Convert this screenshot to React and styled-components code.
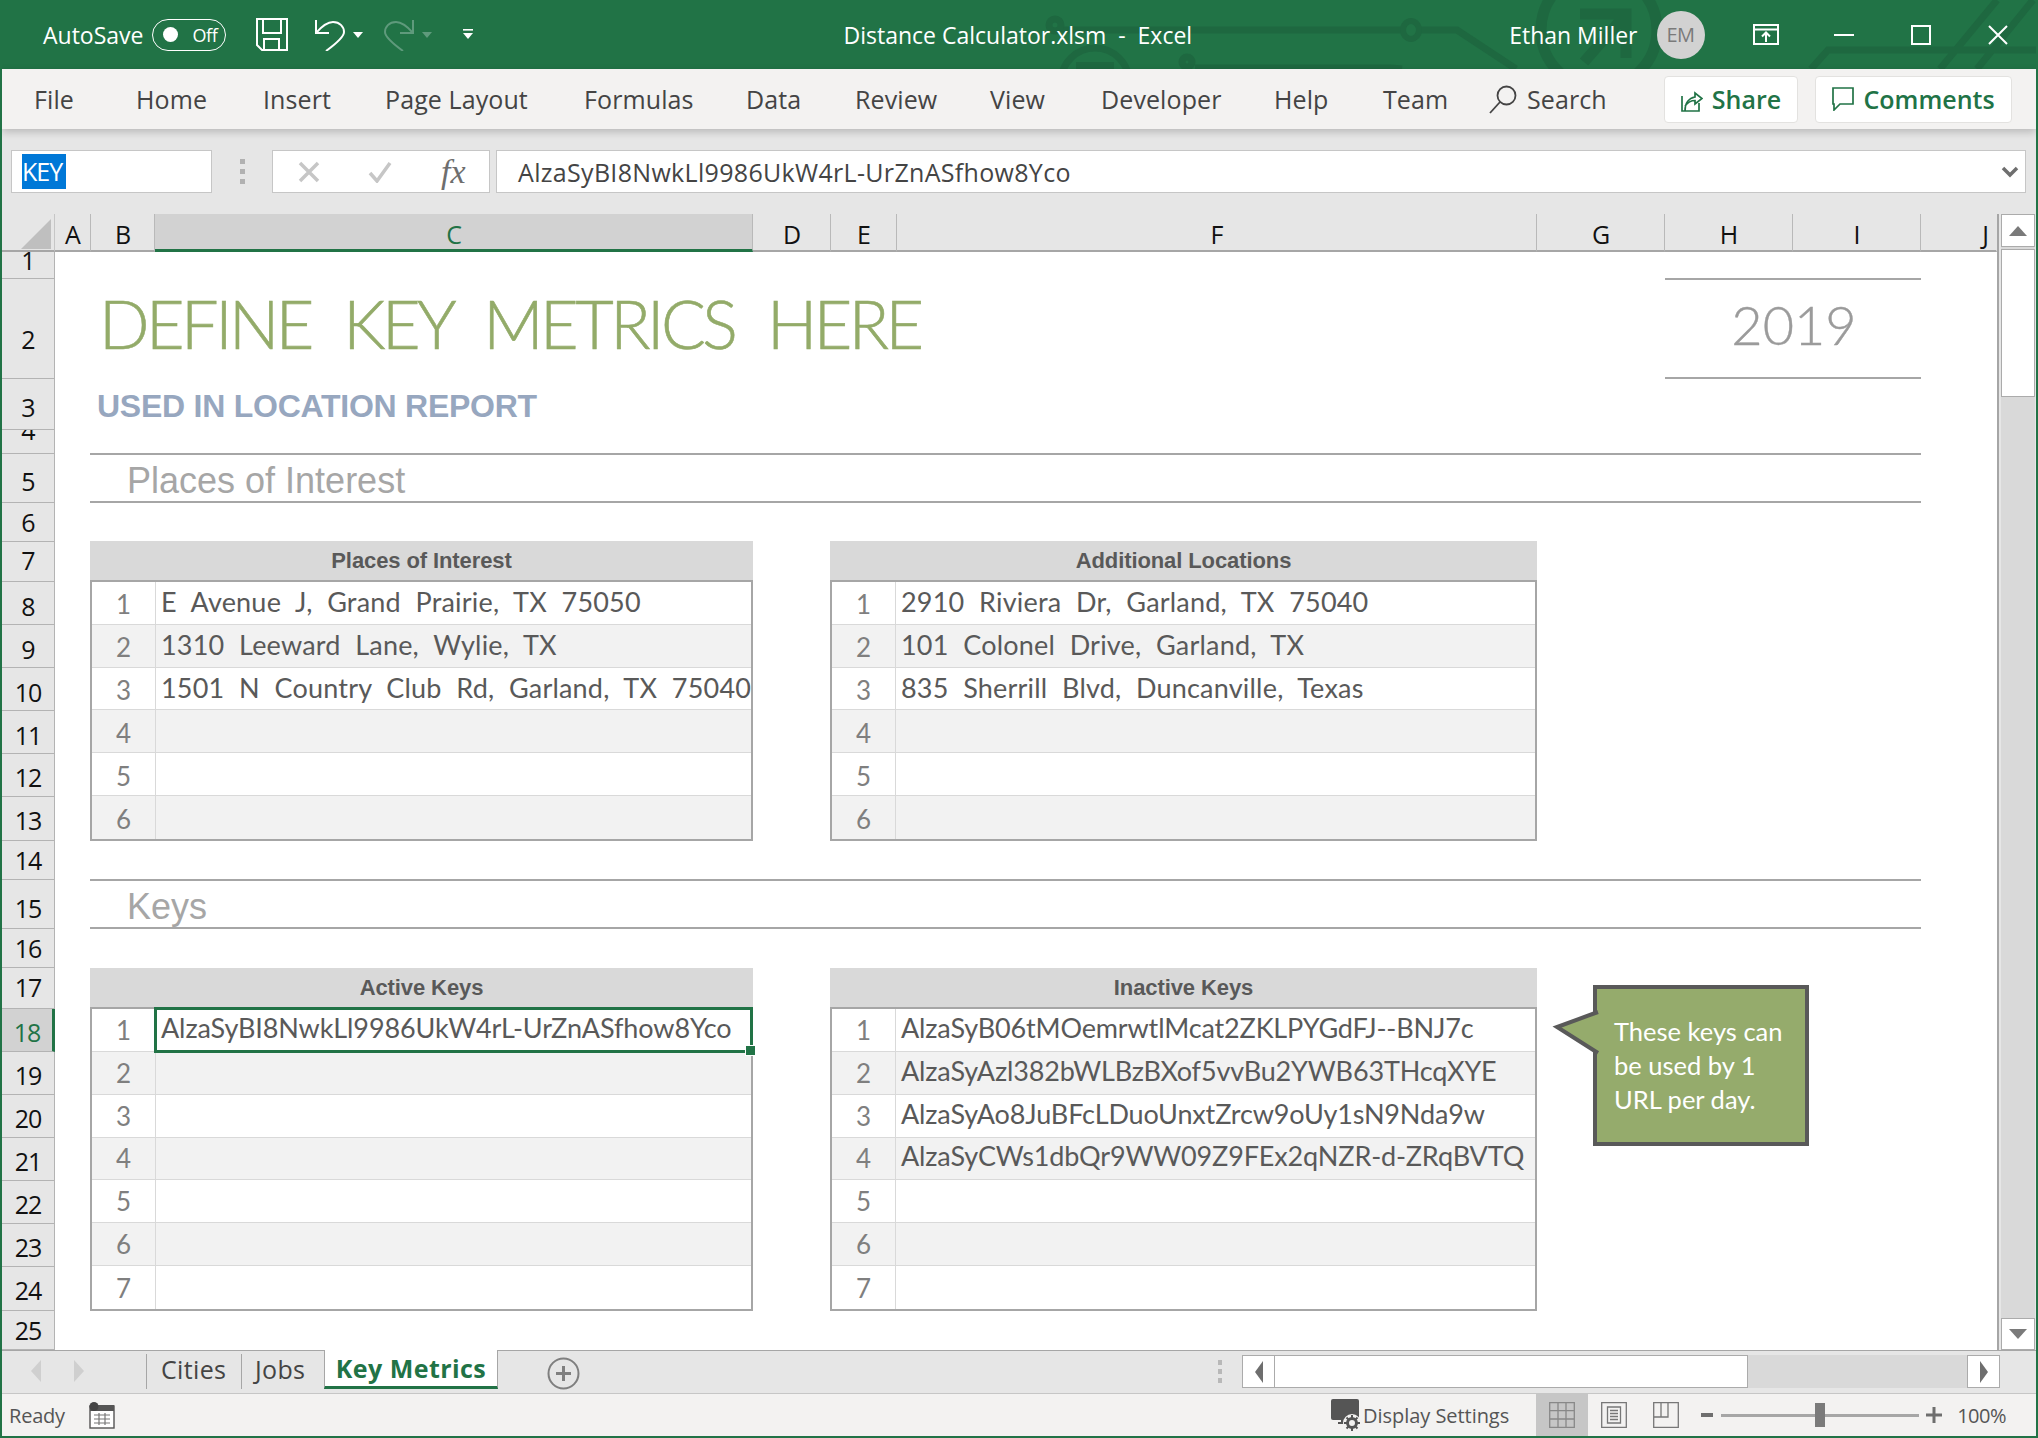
import React from 'react';
import styled, { createGlobalStyle } from 'styled-components';

const GREEN = '#217346';
const UI = '"Open Sans", "Noto Sans", sans-serif';
const ROUND = 'Lato, "Open Sans", sans-serif';
const ARIAL = '"Liberation Sans", Arial, sans-serif';

const Global = createGlobalStyle`
  html, body { margin: 0; padding: 0; background: #fff; }
  #root { width: 2038px; height: 1438px; }
  * { box-sizing: border-box; }
`;

const Win = styled.div`
  width: 2038px; height: 1438px; display: flex; flex-direction: column;
  border-left: 2px solid ${GREEN}; border-right: 2px solid ${GREEN}; border-bottom: 2px solid ${GREEN};
  font-family: ${UI}; overflow: hidden; background: #e6e6e6;
`;

/* ---------- title bar ---------- */
const TitleBar = styled.div`
  position: relative; height: 69px; background: ${GREEN}; color: #fff; display: flex; align-items: center;
  margin: 0 -2px; padding-left: 43px; flex: none; overflow: hidden;
`;
const Circuit = styled.svg`
  position: absolute; left: 0; top: 0; width: 2038px; height: 69px; pointer-events: none;
`;
const TitleGroup = styled.div`
  position: relative; display: flex; align-items: center; flex: none;
  margin-left: ${p => p.$ml || 0}px; gap: ${p => p.$gap || 0}px;
`;
const TitleText = styled.span`
  font-size: 23px; color: #fff; white-space: pre; letter-spacing: ${p => p.$ls || 0}px; line-height: 30px;
`;
const Toggle = styled.div`
  width: 74px; height: 32px; border: 1.5px solid #fff; border-radius: 16px; margin-left: 9px; display: flex; align-items: center;
  padding-left: 10px; gap: 14px; font-size: 18px; letter-spacing: -0.4px;
`;
const Knob = styled.span`
  width: 15px; height: 15px; background: #fff; border-radius: 50%; flex: none;
`;
const Avatar = styled.div`
  width: 48px; height: 48px; border-radius: 50%; background: #d2d2d2; color: #7a7a7a; display: flex;
  align-items: center; justify-content: center; font-size: 20px; letter-spacing: -0.6px;
`;

/* ---------- ribbon ---------- */
const Ribbon = styled.div`
  height: 60px; background: #f3f2f1; display: grid; align-items: center; flex: none; padding-left: 32px;
  grid-template-columns: 102px 127px 122px 199px 162px 109px 135px 111px 173px 109px 107px 174px 151px 197px;
  box-shadow: 0 3px 8px rgba(0,0,0,.2); position: relative; z-index: 2;
`;
const RibbonTab = styled.span`
  font-size: 25px; color: #444; letter-spacing: 0.1px; white-space: nowrap;
`;
const SearchBox = styled.span`
  display: flex; align-items: center; gap: 9px; font-size: 25px; color: #444; letter-spacing: 0.1px; margin-left: -2px;
`;
const PillButton = styled.button`
  height: 47px; width: ${p => p.$w}px; background: #fff; border: 1px solid #e3e2e0; border-radius: 4px; display: flex; align-items: center;
  justify-content: center; gap: 9px; font-family: ${UI}; font-size: 25px; font-weight: 600; color: ${GREEN}; letter-spacing: 0; padding: 0;
`;

/* ---------- formula bar ---------- */
const FormulaBar = styled.div`
  height: 85px; padding: 21px 10px 21px 9px; display: flex; align-items: stretch; flex: none;
`;
const NameBox = styled.div`
  width: 201px; background: #fff; border: 1.5px solid #c6c6c6; display: flex; align-items: center; padding-left: 10px;
`;
const Selected = styled.span`
  background: #0078d7; color: #fff; font-size: 25px; letter-spacing: -1px; line-height: 35px; padding: 0; width: 44px; display: block; white-space: nowrap;
`;
const Grip = styled.div`
  width: 60px; display: flex; flex-direction: column; gap: 5px; align-items: center; justify-content: center;
`;
const GripDot = styled.span`
  width: 5px; height: 5px; background: #b1b1b1;
`;
const FnBox = styled.div`
  width: 218px; background: #fff; border: 1.5px solid #c6c6c6; display: flex; align-items: center; padding-left: 25px; gap: 48px;
`;
const FxLabel = styled.span`
  font-family: "Liberation Serif", serif; font-style: italic; font-size: 34px; color: #6e6e6e; margin-left: 1px;
`;
const FormulaInput = styled.div`
  flex: 1; margin-left: 6px; background: #fff; border: 1.5px solid #c6c6c6; display: flex; align-items: center; padding: 0 6px 0 21px;
  justify-content: space-between; font-size: 25px; color: #444; letter-spacing: 0.32px;
`;

/* ---------- sheet ---------- */
const SheetArea = styled.div`
  height: 1136px; display: flex; flex: none; background: #e6e6e6;
`;
const Sheet = styled.div`
  position: relative; width: 1997px; height: 1136px; overflow: hidden; flex: none; display: grid; background: #fff;
  grid-template-columns: 53px 36px 64px 598px 78px 66px 640px 128px 128px 128px 76px;
  grid-template-rows: ${p => p.$rows};
  border-right: 2px solid #a6a6a6;
`;
const Corner = styled.div`
  grid-column: 1; grid-row: 1; background: #e6e6e6; border-bottom: 2px solid #a6a6a6; border-right: 1px solid #c6c6c6; display: flex; align-items: flex-end;
  justify-content: flex-end; padding: 0 3px 1px 0;
`;
const ColHead = styled.div`
  grid-row: 1; grid-column: ${p => p.$col}; background: ${p => p.$on ? '#d2d2d2' : '#e6e6e6'}; display: flex; align-items: center; padding: 4px ${p => p.$end ? 8 : 0}px 0 0;
  justify-content: ${p => p.$end ? 'flex-end' : 'center'}; font-size: 25px; color: ${p => p.$on ? GREEN : '#111'}; line-height: 30px;
  border-bottom: ${p => p.$on ? `3px solid ${GREEN}` : '2px solid #a6a6a6'}; border-right: 1.5px solid ${p => p.$last ? 'transparent' : '#b9b9b9'};
  letter-spacing: -1px;
`;
const RowHead = styled.div`
  grid-column: 1; grid-row: ${p => p.$row}; background: ${p => p.$on ? '#d2d2d2' : '#e6e6e6'}; overflow: hidden; display: flex; justify-content: center; align-items: flex-end;
  font-size: 25px; line-height: 30px; color: ${p => p.$on ? GREEN : '#111'}; letter-spacing: -1px;
  padding-bottom: ${p => p.$pb}px; border-bottom: 1.5px solid #b3b3b3; border-right: ${p => p.$on ? `3px solid ${GREEN}` : '1.5px solid #b3b3b3'};
`;
const Heading = styled.div`
  grid-column: 3 / 9; grid-row: 3; padding: 0 0 13px 8px; align-self: center;
  font-family: Lato, sans-serif; font-weight: 300; font-size: 66.5px; line-height: 80px; color: #93ab69; word-spacing: 18px; letter-spacing: -3.5px; white-space: nowrap;
  -webkit-text-stroke: 0.6px #93ab69;
`;
const SubHeading = styled.div`
  grid-column: 3 / 9; grid-row: 4; padding: 2px 0 0 6px; font-family: ${ARIAL}; font-weight: 700; font-size: 32px; line-height: 40px; color: #97a7bf; letter-spacing: -0.25px;
  align-self: center; white-space: nowrap;
`;
const YearBox = styled.div`
  grid-column: 9 / 11; grid-row: 3; margin-top: -1px; border-top: 2px solid #a6a6a6; border-bottom: 2px solid #a6a6a6; display: flex; align-items: center; justify-content: center;
  font-family: Lato, sans-serif; font-weight: 300; font-size: 54px; color: #9b9b9b; padding: 0 0 8px 2px; -webkit-text-stroke: 0.4px #9b9b9b;
`;
const Section = styled.div`
  grid-column: 3 / 11; grid-row: ${p => p.$row}; margin: -1px 0 0 -1px; border-top: 2px solid #a6a6a6; border-bottom: 2px solid #a6a6a6; display: flex; align-items: center;
  padding: 6px 0 0 37px; font-family: ${ARIAL}; font-size: 36px; color: #a6a6a6; letter-spacing: 0; line-height: 40px;
`;
const Table = styled.div`
  grid-column: ${p => p.$col}; grid-row: ${p => p.$row}; display: flex; flex-direction: column; margin: ${p => p.$mt}px 0 0 -1px;
`;
const TableHead = styled.div`
  height: 39px; flex: none; background: #d9d9d9; display: flex; align-items: center; justify-content: center;
  font-family: ${ARIAL}; font-weight: 700; font-size: 22px; color: #595959; letter-spacing: -0.1px; padding-top: 1px;
`;
const TableBody = styled.div`
  flex: 1; border: 2px solid #a6a6a6; display: grid; grid-auto-rows: 1fr;
`;
const TableRow = styled.div`
  display: grid; grid-template-columns: 64px 1fr; background: ${p => p.$alt ? '#f2f2f2' : '#fff'}; border-bottom: ${p => p.$last ? 0 : '1.5px solid #d9d9d9'};
`;
const RowNum = styled.div`
  display: flex; align-items: center; justify-content: center; border-right: 1.5px solid #d9d9d9; padding: 3px 0 ${p => p.$lift}px 0;
  font-family: ${ROUND}; font-size: 26px; color: #7f7f7f;
`;
const RowVal = styled.div`
  position: relative; display: flex; align-items: center; padding: 0 0 ${p => 2 + p.$lift}px 5px; font-family: ${ROUND}; font-size: 27px; color: #595959;
  word-spacing: ${p => p.$ws || 0}px; letter-spacing: ${p => p.$ls || 0}px; white-space: nowrap;
  ${p => p.$sel && `
    outline: 3px solid ${GREEN}; outline-offset: -1px;
    &::after { content: ''; position: absolute; right: -5px; bottom: -5px; width: 9px; height: 9px; background: ${GREEN}; border: 1px solid #fff; }
  `}
`;
const Callout = styled.div`
  position: absolute; left: 1591px; top: 771px; width: 216px; height: 161px; background: #95ab6c; border: 4px solid #595959; color: #fff;
  font-family: Lato, sans-serif; font-size: 25.5px; line-height: 34px; padding: 25px 0 0 17px; white-space: pre-line;
`;
const Tail = styled.svg`
  position: absolute; left: -45px; top: 20px; width: 50px; height: 48px; overflow: visible;
`;

/* ---------- scrollbars ---------- */
const VScroll = styled.div`
  width: 34px; margin-left: 2px; background: #d9d9d9; display: flex; flex-direction: column;
`;
const ScrollBtn = styled.div`
  background: #fff; border: 1.5px solid #ababab; display: flex; align-items: center; justify-content: center; flex: none;
  width: ${p => p.$w}px; height: ${p => p.$h}px;
`;
const VThumb = styled.div`
  height: 148px; margin-top: 2px; background: #fff; border: 1.5px solid #ababab; flex: none;
`;
const VSpacer = styled.div`
  flex: 1;
`;

/* ---------- tab bar ---------- */
const TabBar = styled.div`
  height: 44px; flex: none; display: flex; align-items: flex-start; border-bottom: 1.5px solid #c6c6c6; border-top: 1.5px solid #a6a6a6; background: #e6e6e6; position: relative;
`;
const NavArrows = styled.div`
  width: 144px; height: 39px; display: flex; align-items: center; gap: 33px; padding-left: 29px; flex: none;
`;
const SheetTab = styled.div`
  height: 35px; width: ${p => p.$w}px; margin-top: 3px; display: flex; align-items: center; padding: 0 0 5px ${p => p.$pl}px; flex: none;
  font-size: 25px; line-height: 30px; letter-spacing: 0.35px; color: #444; border-left: 1px solid #a6a6a6;
`;
const ActiveTab = styled.div`
  height: 39px; width: 174px; margin-top: -1px; flex: none; display: flex; align-items: center; justify-content: center; background: #fff;
  border-bottom: 3px solid ${GREEN}; border-left: 1px solid #a6a6a6; border-right: 1.5px solid #a6a6a6;
  font-size: 25px; font-weight: 700; letter-spacing: 0.45px; color: ${GREEN};
`;
const AddWrap = styled.div`
  margin: 6px 0 0 49px; display: flex; width: 33px; height: 33px; flex: none;
`;
const HScrollWrap = styled.div`
  margin-left: auto; display: flex; align-items: center; height: 33px; margin-top: 4px; margin-right: 36px;
`;
const HGrip = styled.div`
  display: flex; flex-direction: column; gap: 4px; margin-right: 20px;
`;
const HGripDot = styled.span`
  width: 4px; height: 5px; background: #b8b8b8; display: block;
`;
const HThumb = styled.div`
  width: 473px; height: 33px; background: #fff; border: 1.5px solid #ababab; border-left: 0; flex: none;
`;
const HTrack = styled.div`
  width: 219px; height: 33px; background: #d9d9d9; flex: none;
`;

/* ---------- status bar ---------- */
const StatusBar = styled.div`
  height: 42px; flex: none; background: #f3f2f1; display: flex; align-items: center; font-size: 20px; color: #555; letter-spacing: -0.2px; padding-left: 7px;
`;
const StatusRight = styled.div`
  margin-left: auto; display: flex; align-items: center; height: 100%;
`;
const DisplayLabel = styled.span`
  margin: 0 27px 0 1px; letter-spacing: -0.05px;
`;
const ViewBtn = styled.div`
  width: ${p => p.$w}px; height: 100%; display: flex; align-items: center; justify-content: center; background: ${p => p.$on ? '#c6c6c6' : 'transparent'}; flex: none;
`;
const Slider = styled.div`
  position: relative; width: 198px; height: 3px; background: #a6a6a6; margin: 0 7px 0 8px; flex: none;
`;
const SliderThumb = styled.span`
  position: absolute; left: 94px; top: -11px; width: 10px; height: 24px; background: #7a7a7a;
`;
const Zoom = styled.span`
  margin-left: 15px; margin-right: 30px; font-size: 20px; color: #555; letter-spacing: -0.5px;
`;

/* ---------- icons ---------- */
const I = styled.svg`
  flex: none; display: block; margin-left: ${p => p.$ml || 0}px;
`;
const Tri = ({ d, w = 14, h = 22, c = '#cfcfcf' }) => {
  const pts = { l: `${w},0 ${w},${h} 0,${h/2}`, r: `0,0 0,${h} ${w},${h/2}`, u: `0,${h} ${w},${h} ${w/2},0`, d: `0,0 ${w},0 ${w/2},${h}` }[d];
  return <I width={w} height={h} viewBox={`0 0 ${w} ${h}`}><polygon points={pts} fill={c} /></I>;
};

const rowDefs = [
  [27,3],[100,24],[51,7],[24,8],[49,6],[39,4],[40,6],
  [43,3],[43,3],[43,3],[43,3],[43,4],[44,5],
  [39,4],[49,5],[39,4],[41,6],
  [43,4],[43,4],[43,4],[43,4],[43,4],[43,4],[44,5],
  [39,4],[10,0],
];
const rowsTemplate = '38px ' + rowDefs.map(r => r[0] + 'px').join(' ');
const cols = [['A',2],['B',3],['C',4],['D',5],['E',6],['F',7],['G',8],['H',9],['I',10],['J',11]];

const DataTable = ({ col, row, mt, title, count, items, sel, ws, ls, lift = 0 }) => (
  <Table $col={col} $row={row} $mt={mt}>
    <TableHead>{title}</TableHead>
    <TableBody>
      {Array.from({ length: count }, (_, i) => (
        <TableRow key={i} $alt={i % 2 === 1} $last={i === count - 1}>
          <RowNum $lift={lift}>{i + 1}</RowNum>
          <RowVal $ws={ws} $ls={ls} $lift={lift} $sel={sel && i === 0}>{items[i] || ''}</RowVal>
        </TableRow>
      ))}
    </TableBody>
  </Table>
);

export default function App() {
  return (
    <Win>
      <Global />
      <TitleBar>
        <Circuit viewBox="0 0 2038 69" fill="none" stroke="#1e6840" strokeWidth="7">
          <path d="M1062 30H1402M1420 30H1457L1516 69" />
          <ellipse cx="1411" cy="30" rx="8" ry="9" strokeWidth="6" />
          <circle cx="1055" cy="25" r="6" />
          <circle cx="1095" cy="82" r="34" />
          <path d="M1076 66H1114" strokeWidth="8" />
          <circle cx="1187" cy="62" r="5" />
          <path d="M1195 68H1390L1402 69" />
          <circle cx="1599" cy="30" r="58" strokeWidth="11" />
          <path d="M1580 14H1626V58M1626 14L1584 62" strokeWidth="11" />
          <path d="M1811 69L1828 50H2038M1997 0L1940 69M2033 0L1977 69" />
        </Circuit>
        <TitleGroup>
          <TitleText>AutoSave</TitleText>
          <Toggle><Knob />Off</Toggle>
        </TitleGroup>
        <TitleGroup $ml={30}>
          <I width="32" height="33" viewBox="0 0 32 33" fill="none" stroke="#fff" strokeWidth="2">
            <path d="M1 1H31V32H6L1 27Z" />
            <path d="M7 1V15H25V1M8 32V21H23V32" />
          </I>
        </TitleGroup>
        <TitleGroup $ml={27}>
          <I width="30" height="33" viewBox="0 0 30 33" fill="none" stroke="#fff" strokeWidth="2">
            <path d="M1 2V15H14M1 15C7 8 12 4 18 4C25 4 29 9 29 14C29 19 22 25 11 33" />
          </I>
          <I $ml={8} width="10" height="6" viewBox="0 0 10 6"><polygon points="0,0 10,0 5,6" fill="#fff" /></I>
        </TitleGroup>
        <TitleGroup $ml={21}>
          <I width="30" height="33" viewBox="0 0 30 33" fill="none" stroke="#5f9a7c" strokeWidth="2">
            <path d="M29 2V15H16M29 15C23 8 18 4 12 4C5 4 1 9 1 14C1 19 8 25 19 33" />
          </I>
          <I $ml={8} width="10" height="6" viewBox="0 0 10 6"><polygon points="0,0 10,0 5,6" fill="#5f9a7c" /></I>
        </TitleGroup>
        <TitleGroup $ml={31}>
          <I width="10" height="11" viewBox="0 0 10 11" fill="#fff"><rect width="10" height="1.6" /><polygon points="0,4 10,4 5,10" /></I>
        </TitleGroup>
        <TitleGroup $ml={370}>
          <TitleText>{'Distance Calculator.xlsm  -  Excel'}</TitleText>
        </TitleGroup>
        <TitleGroup $ml={317}>
          <TitleText>Ethan Miller</TitleText>
        </TitleGroup>
        <TitleGroup $ml={19}><Avatar>EM</Avatar></TitleGroup>
        <TitleGroup $ml={48}>
          <I width="26" height="21" viewBox="0 0 26 21" fill="none" stroke="#fff" strokeWidth="2">
            <path d="M1 1H25V20H1ZM1 5.5H25M13 18V9M9 12.5L13 8.5L17 12.5" />
          </I>
        </TitleGroup>
        <TitleGroup $ml={55}>
          <I width="20" height="2" viewBox="0 0 20 2"><rect width="20" height="2" fill="#fff" /></I>
        </TitleGroup>
        <TitleGroup $ml={57}>
          <I width="20" height="20" viewBox="0 0 20 20" fill="none" stroke="#fff" strokeWidth="2"><rect x="1" y="1" width="18" height="18" /></I>
        </TitleGroup>
        <TitleGroup $ml={57}>
          <I width="20" height="20" viewBox="0 0 20 20" fill="none" stroke="#fff" strokeWidth="2"><path d="M1 1L19 19M19 1L1 19" /></I>
        </TitleGroup>
      </TitleBar>

      <Ribbon>
        {['File','Home','Insert','Page Layout','Formulas','Data','Review','View','Developer','Help','Team'].map(t => <RibbonTab key={t}>{t}</RibbonTab>)}
        <SearchBox>
          <I width="30" height="30" viewBox="0 0 30 30" fill="none" stroke="#444" strokeWidth="1.8"><circle cx="18.5" cy="11.5" r="9" /><path d="M12 18L2 29" /></I>
          Search
        </SearchBox>
        <PillButton $w={134}>
          <I width="22" height="25" viewBox="0 0 22 25" fill="none" stroke={GREEN} strokeWidth="1.7">
            <path d="M1 9V24H18V16M4 24C4 16 8 11 14 10V6L21 11.5L14 17V13.5C10 13.5 7 15 4 19" />
          </I>
          Share
        </PillButton>
        <PillButton $w={197}>
          <I width="22" height="24" viewBox="0 0 22 24" fill="none" stroke={GREEN} strokeWidth="1.7"><path d="M1 1H21V17H8L2 23V17H1Z" /></I>
          Comments
        </PillButton>
      </Ribbon>

      <FormulaBar>
        <NameBox><Selected>KEY</Selected></NameBox>
        <Grip><GripDot /><GripDot /><GripDot /></Grip>
        <FnBox>
          <I width="22" height="22" viewBox="0 0 22 22" fill="none" stroke="#c6c6c6" strokeWidth="3.5"><path d="M2 2L20 20M20 2L2 20" /></I>
          <I width="24" height="22" viewBox="0 0 24 22" fill="none" stroke="#c6c6c6" strokeWidth="3.5"><path d="M2 12L9 20L22 2" /></I>
          <FxLabel>fx</FxLabel>
        </FnBox>
        <FormulaInput>
          AlzaSyBI8NwkLl9986UkW4rL-UrZnASfhow8Yco
          <I width="18" height="12" viewBox="0 0 18 12" fill="none" stroke="#6e6e6e" strokeWidth="3.5"><path d="M2 2L9 9L16 2" /></I>
        </FormulaInput>
      </FormulaBar>

      <SheetArea>
        <Sheet $rows={rowsTemplate}>
          <Corner>
            <I width="30" height="30" viewBox="0 0 30 30"><polygon points="30,0 30,30 0,30" fill="#bfbfbf" /></I>
          </Corner>
          {cols.map(([l, c]) => (
            <ColHead key={l} $col={c} $on={l === 'C'} $last={l === 'J'} $end={l === 'J'}>{l}</ColHead>
          ))}
          {rowDefs.map(([h, pb], i) => (
            <RowHead key={i} $row={i + 2} $pb={pb} $on={i === 17}>{i < 25 ? i + 1 : ''}</RowHead>
          ))}

          <Heading>DEFINE KEY METRICS HERE</Heading>
          <SubHeading>USED IN LOCATION REPORT</SubHeading>
          <YearBox>2019</YearBox>
          <Section $row={6}>Places of Interest</Section>

          <DataTable col="3 / 5" row="8 / 15" mt={-1} title="Places of Interest" count={6} ws={7.5} ls={0.2}
            items={['E Avenue J, Grand Prairie, TX 75050', '1310 Leeward Lane, Wylie, TX', '1501 N Country Club Rd, Garland, TX 75040']} />
          <DataTable col="6 / 8" row="8 / 15" mt={-1} title="Additional Locations" count={6} ws={7.5} ls={0.2}
            items={['2910 Riviera Dr, Garland, TX 75040', '101 Colonel Drive, Garland, TX', '835 Sherrill Blvd, Duncanville, Texas']} />

          <Section $row={16}>Keys</Section>

          <DataTable col="3 / 5" row="18 / 26" mt={0} title="Active Keys" count={7} sel ls={-0.1} lift={3}
            items={['AlzaSyBI8NwkLl9986UkW4rL-UrZnASfhow8Yco']} />
          <DataTable col="6 / 8" row="18 / 26" mt={0} title="Inactive Keys" count={7} ls={-0.15} lift={3}
            items={['AlzaSyB06tMOemrwtlMcat2ZKLPYGdFJ--BNJ7c', 'AlzaSyAzl382bWLBzBXof5vvBu2YWB63THcqXYE', 'AlzaSyAo8JuBFcLDuoUnxtZrcw9oUy1sN9Nda9w', 'AlzaSyCWs1dbQr9WW09Z9FEx2qNZR-d-ZRqBVTQ']} />

          <Callout>
            <Tail viewBox="0 0 50 48">
              <polygon points="47,2 4,18 47,44" fill="#95ab6c" />
              <path d="M46 3L5 18L46 44" fill="none" stroke="#595959" strokeWidth="4" />
            </Tail>
            {'These keys can\nbe used by 1\nURL per day.'}
          </Callout>
        </Sheet>
        <VScroll>
          <ScrollBtn $w={34} $h={33}><Tri d="u" w={18} h={10} c="#7a7a7a" /></ScrollBtn>
          <VThumb />
          <VSpacer />
          <ScrollBtn $w={34} $h={32}><Tri d="d" w={18} h={10} c="#7a7a7a" /></ScrollBtn>
        </VScroll>
      </SheetArea>

      <TabBar>
        <NavArrows><Tri d="l" w={10} h={22} /><Tri d="r" w={10} h={22} /></NavArrows>
        <SheetTab $w={95} $pl={14}>Cities</SheetTab>
        <SheetTab $w={83} $pl={13}>Jobs</SheetTab>
        <ActiveTab>Key Metrics</ActiveTab>
        <AddWrap>
          <I width="33" height="33" viewBox="0 0 33 33" fill="none" stroke="#7f7f7f"><circle cx="16.5" cy="16.5" r="15" strokeWidth="2" /><path d="M16.5 9V24M9 16.5H24" strokeWidth="3" /></I>
        </AddWrap>
        <HScrollWrap>
          <HGrip><HGripDot /><HGripDot /><HGripDot /></HGrip>
          <ScrollBtn $w={33} $h={33}><Tri d="l" w={8} h={22} c="#6e6e6e" /></ScrollBtn>
          <HThumb />
          <HTrack />
          <ScrollBtn $w={33} $h={33}><Tri d="r" w={8} h={22} c="#6e6e6e" /></ScrollBtn>
        </HScrollWrap>
      </TabBar>

      <StatusBar>
        Ready
        <I $ml={24} width="26" height="27" viewBox="0 0 26 27">
          <rect x="1" y="4" width="24" height="22" fill="#fff" stroke="#555" strokeWidth="1.4" />
          <rect x="1" y="3" width="24" height="6" fill="#555" />
          <circle cx="5" cy="4.5" r="4.5" fill="#444" />
          <path d="M5 13H21M5 17H21M5 21H21M10 11V23M16 11V23" stroke="#777" strokeWidth="1.2" />
        </I>
        <StatusRight>
          <I width="31" height="34" viewBox="0 0 31 34" fill="#555">
            <rect x="0" y="1" width="28" height="21" rx="2" />
            <path d="M10 22H14V26H7V24H10Z" />
            <circle cx="21" cy="25" r="7" fill="#f3f2f1" stroke="#f3f2f1" strokeWidth="4" />
            <circle cx="21" cy="25" r="4.5" fill="none" stroke="#555" strokeWidth="3" />
            <path d="M21 17V33M13 25H29M15.5 19.5L26.5 30.5M26.5 19.5L15.5 30.5" stroke="#555" strokeWidth="2" strokeDasharray="3 10" />
          </I>
          <DisplayLabel>Display Settings</DisplayLabel>
          <ViewBtn $w={52} $on>
            <I width="26" height="26" viewBox="0 0 26 26" fill="none" stroke="#888" strokeWidth="1.3"><path d="M.7.7H25.3V25.3H.7ZM.7 8.7H25.3M.7 17H25.3M9 .7V25.3M17 .7V25.3" /></I>
          </ViewBtn>
          <ViewBtn $w={52}>
            <I width="26" height="26" viewBox="0 0 26 26" fill="none" stroke="#777" strokeWidth="1.3"><path d="M.7.7H25.3V25.3H.7ZM6.5 5H19.5V21H6.5ZM9 8.5H17M9 11.5H17M9 14.5H17M9 17.5H17" /></I>
          </ViewBtn>
          <ViewBtn $w={52}>
            <I width="26" height="26" viewBox="0 0 26 26" fill="none" stroke="#777" strokeWidth="1.3"><path d="M.7.7H25.3V25.3H.7ZM.7 15H15V.7M8 .7V15" /></I>
          </ViewBtn>
          <I $ml={9} width="12" height="4" viewBox="0 0 12 4"><rect width="12" height="4" fill="#6e6e6e" /></I>
          <Slider><SliderThumb /></Slider>
          <I width="16" height="16" viewBox="0 0 16 16"><path d="M0 8H16M8 0V16" stroke="#6e6e6e" strokeWidth="3" /></I>
          <Zoom>100%</Zoom>
        </StatusRight>
      </StatusBar>
    </Win>
  );
}
